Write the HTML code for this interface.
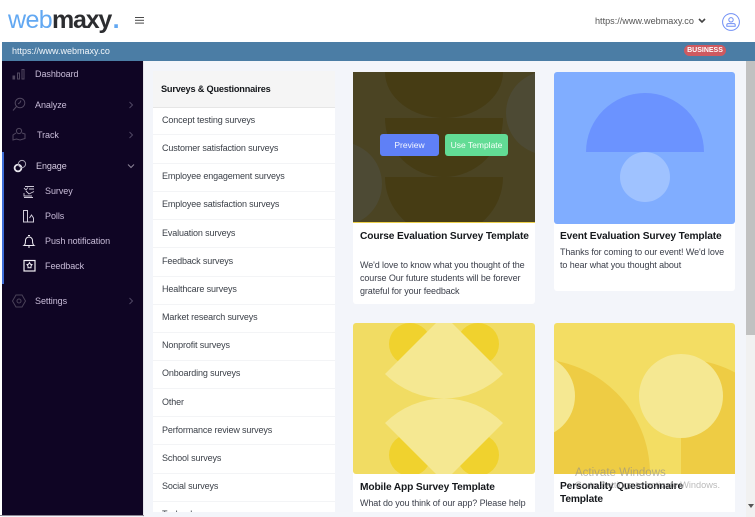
<!DOCTYPE html>
<html><head><meta charset="utf-8">
<style>
html,body{margin:0;padding:0;width:755px;height:517px;overflow:hidden;background:#f3f5fa}
body{font-family:"Liberation Sans",sans-serif;position:relative}
div,span,svg{position:absolute;white-space:nowrap}
.nav{color:#c8bcd8;font-size:9px;line-height:12px;letter-spacing:-.06px}
.row{left:162px;font-size:9px;line-height:12px;color:#3a3f47;letter-spacing:-.13px}
.sep{left:153px;width:182px;height:1px;background:#f3f4f6}
.ttl{font-size:10.2px;font-weight:bold;line-height:13px;color:#15181c;letter-spacing:-.13px}
.txt{font-size:9px;line-height:13.4px;color:#3b3f4a;letter-spacing:-.1px}
.chev{left:128px}
</style></head><body>
<!-- header -->
<div style="left:0;top:0;width:755px;height:42px;background:#fff"></div>
<div style="left:0;top:42px;width:2px;height:475px;background:#fff"></div>
<div style="left:8px;top:4px;font-size:25px;line-height:32px;color:#62a8f2;letter-spacing:-.6px">web</div>
<div style="left:52px;top:4px;font-size:25px;line-height:32px;font-weight:bold;color:#2c2d30;letter-spacing:-1.2px">maxy<span style="position:static;color:#62a8f2;letter-spacing:0;margin-left:1.500px">.</span></div>
<div style="left:135px;top:17px;width:9px;height:1.3px;background:#4a4a4a;box-shadow:0 2.800px 0 #4a4a4a,0 5.600px 0 #4a4a4a"></div>
<div style="left:595px;top:15px;font-size:9.100px;line-height:12px;color:#555">https://www.webmaxy.co</div>
<svg style="left:698px;top:18px" width="8" height="6" viewBox="0 0 8 6"><path d="M1 1l3 3 3-3" fill="none" stroke="#444" stroke-width="1.600"/></svg>
<svg style="left:722px;top:13px" width="18" height="18" viewBox="0 0 18 18" fill="none" stroke="#6f8ef5"><circle cx="9" cy="9" r="8.400"/><circle cx="9" cy="6.800" r="2.200"/><path d="M4.800 13.200v-1.200q0-1.400 1.400-1.400h5.600q1.400 0 1.400 1.400v1.200z"/></svg>
<!-- blue bar -->
<div style="left:2px;top:42px;width:753px;height:19px;background:#4b7da5"></div>
<div style="left:12px;top:45px;font-size:9px;line-height:12px;color:#f2f6fa">https://www.webmaxy.co</div>
<div style="left:684px;top:45px;width:42px;height:11px;border-radius:6px;background:#cf5a60;color:#fff;font-size:7px;font-weight:bold;line-height:11px;text-align:center">BUSINESS</div>
<!-- sidebar -->
<div style="left:2px;top:61px;width:141px;height:454px;background:#0f0524"></div>
<div style="left:2px;top:152px;width:2px;height:132px;background:#3f6fd8"></div>
<div style="left:143px;top:61px;width:1px;height:456px;background:#e4e5ea"></div>
<div style="left:0;top:515px;width:144px;height:1px;background:#8d8894"></div>
<svg style="left:12px;top:67px" width="14" height="14" viewBox="0 0 14 14" fill="none" stroke="#50475f"><rect x="1" y="9" width="1.600" height="3" fill="#50475f"/><rect x="5.500" y="6" width="2" height="6"/><rect x="10" y="2.500" width="2" height="9.500"/></svg>
<div class="nav" style="left:35px;top:68px">Dashboard</div>
<svg style="left:12px;top:97px" width="14" height="15" viewBox="0 0 14 15" fill="none" stroke="#50475f"><circle cx="8" cy="6" r="4.800"/><path d="M4.500 9.500L1 13.500M6 7l2-1.500 1-2"/></svg>
<div class="nav" style="left:35px;top:99px">Analyze</div>
<svg class="chev" style="top:101px" width="6" height="8" viewBox="0 0 6 8"><path d="M1.500 1l3 3-3 3" fill="none" stroke="#4f4763"/></svg>
<svg style="left:12px;top:127px" width="14" height="15" viewBox="0 0 14 15" fill="none" stroke="#50475f"><circle cx="7" cy="4" r="2.600"/><path d="M4 6l-3 2v5l3.500-1 3.500 1 5-1.500V7l-3-1"/></svg>
<div class="nav" style="left:37px;top:129px">Track</div>
<svg class="chev" style="top:131px" width="6" height="8" viewBox="0 0 6 8"><path d="M1.500 1l3 3-3 3" fill="none" stroke="#4f4763"/></svg>
<svg style="left:13px;top:159px" width="14" height="14" viewBox="0 0 14 14" fill="none" stroke="#e8e6ee"><circle cx="5" cy="9" r="3.400" stroke-width="1.800"/><circle cx="9" cy="5" r="3.600" stroke="#aaa5b5"/></svg>
<div class="nav" style="left:36px;top:160px;color:#d6cce2">Engage</div>
<svg style="left:127px;top:163px" width="8" height="6" viewBox="0 0 8 6"><path d="M1 1.500l3 3 3-3" fill="none" stroke="#8d8599"/></svg>
<svg style="left:22px;top:185px" width="14" height="14" viewBox="0 0 14 14" fill="none" stroke="#cfcad8" stroke-width=".9"><path d="M3 1.500h9M7 4h5M2 3l2 2 2-2.500M4 6l3 3 5-2.500M2 8v3h8M2 12.500h9"/></svg>
<div class="nav" style="left:45px;top:185px">Survey</div>
<svg style="left:22px;top:209px" width="14" height="14" viewBox="0 0 14 14" fill="none" stroke="#cfcad8"><path d="M1.500 13V1.500h4V13zM5.500 13h6V9l-2-3-2 3"/></svg>
<div class="nav" style="left:45px;top:210px">Polls</div>
<svg style="left:22px;top:234px" width="14" height="14" viewBox="0 0 14 14" fill="none" stroke="#f0eef4"><path d="M2 11.500h10q-1.500-1-1.500-5a3.500 3.500 0 0 0-7 0q0 4-1.500 5zM6 1.500h2M6 13h2"/></svg>
<div class="nav" style="left:45px;top:235px">Push notification</div>
<svg style="left:23px;top:259px" width="13" height="13" viewBox="0 0 13 13" fill="none" stroke="#f0eef4"><rect x="1" y="1.500" width="11" height="10.500" stroke-width="1.200"/><path d="M6.500 3.500l1 1.800 1.500.3-1 1.400v1.800h-3V7l-1-1.400 1.500-.3z"/></svg>
<div class="nav" style="left:45px;top:260px">Feedback</div>
<svg style="left:12px;top:294px" width="14" height="14" viewBox="0 0 14 14" fill="none" stroke="#4a4258"><path d="M4 1h6l3.500 6-3.500 6H4L.500 7z"/><circle cx="7" cy="7" r="2"/></svg>
<div class="nav" style="left:35px;top:295px">Settings</div>
<svg class="chev" style="top:297px" width="6" height="8" viewBox="0 0 6 8"><path d="M1.500 1l3 3-3 3" fill="none" stroke="#4f4763"/></svg>
<!-- list panel -->
<div style="left:153px;top:71px;width:182px;height:441px;background:#fff"></div>
<div style="left:153px;top:71px;width:182px;height:36px;background:#f5f5f5;border-bottom:1px solid #e6e6e6;box-sizing:content-box"></div>
<div style="left:161px;top:83px;font-size:9.200px;font-weight:bold;line-height:12px;color:#15181c;letter-spacing:-.2px">Surveys &amp; Questionnaires</div>
<div class="row" style="top:114px">Concept testing surveys</div><div class="sep" style="top:134px"></div>
<div class="row" style="top:142px">Customer satisfaction surveys</div><div class="sep" style="top:163px"></div>
<div class="row" style="top:170px">Employee engagement surveys</div><div class="sep" style="top:191px"></div>
<div class="row" style="top:198px">Employee satisfaction surveys</div><div class="sep" style="top:219px"></div>
<div class="row" style="top:227px">Evaluation surveys</div><div class="sep" style="top:247px"></div>
<div class="row" style="top:255px">Feedback surveys</div><div class="sep" style="top:276px"></div>
<div class="row" style="top:283px">Healthcare surveys</div><div class="sep" style="top:304px"></div>
<div class="row" style="top:311px">Market research surveys</div><div class="sep" style="top:332px"></div>
<div class="row" style="top:339px">Nonprofit surveys</div><div class="sep" style="top:360px"></div>
<div class="row" style="top:367px">Onboarding surveys</div><div class="sep" style="top:388px"></div>
<div class="row" style="top:396px">Other</div><div class="sep" style="top:416px"></div>
<div class="row" style="top:424px">Performance review surveys</div><div class="sep" style="top:444px"></div>
<div class="row" style="top:452px">School surveys</div><div class="sep" style="top:473px"></div>
<div class="row" style="top:480px">Social surveys</div><div class="sep" style="top:501px"></div>
<svg style="left:153px;top:502px" width="182" height="10" viewBox="0 0 182 10"><text x="9" y="15" font-family="Liberation Sans, sans-serif" font-size="9" letter-spacing="-.13" fill="#3a3f47">Technology surveys</text></svg>
<!-- cards -->
<div style="left:353px;top:72px;width:182px;height:232px;background:#fff;border-radius:3px"></div>
<svg style="left:353px;top:72px" width="182" height="151" viewBox="353 72 182 151">
<rect x="353" y="72" width="182" height="151" fill="#4b4423"/>
<path d="M385 72h118a59 46 0 0 1-118 0z" fill="#463c14"/>
<path d="M385 118h118a59 59 0 0 1-118 0z" fill="#463c14"/>
<path d="M385 177h118a59 59 0 0 1-118 0z" fill="#463c14"/>
<circle cx="548" cy="113" r="42" fill="#4d4a34"/><circle cx="340" cy="184" r="42" fill="#4d4a34"/>
<rect x="353" y="222" width="182" height="1.500" fill="#ecd04a"/>
</svg>
<div style="left:380px;top:134px;width:59px;height:22px;background:#5f80f6;border-radius:3px;color:#f4f6ff;font-size:8.500px;line-height:22px;text-align:center">Preview</div>
<div style="left:445px;top:134px;width:63px;height:22px;background:#62dc95;border-radius:3px;color:#f4fff8;font-size:8.500px;line-height:22px;text-align:center">Use Template</div>
<div class="ttl" style="left:360px;top:230px">Course Evaluation Survey Template</div>
<div class="txt" style="left:360px;top:258.500px">We'd love to know what you thought of the<br>course Our future students will be forever<br>grateful for your feedback</div>

<div style="left:554px;top:72px;width:181px;height:219px;background:#fff;border-radius:3px"></div>
<svg style="left:554px;top:72px" width="181" height="152" viewBox="554 72 181 152">
<rect x="554" y="72" width="181" height="152" rx="3" fill="#80adff"/>
<path d="M586 152a59 59 0 0 1 118 0z" fill="#6b93ff"/>
<circle cx="645" cy="177" r="25" fill="#9fc2ff"/>
</svg>
<div class="ttl" style="left:560px;top:230px">Event Evaluation Survey Template</div>
<div class="txt" style="left:560px;top:245.500px">Thanks for coming to our event! We'd love<br>to hear what you thought about</div>

<div style="left:353px;top:323px;width:182px;height:189px;background:#fff;border-radius:3px 3px 0 0"></div>
<svg style="left:353px;top:323px" width="182" height="151" viewBox="353 323 182 151">
<rect x="353" y="323" width="182" height="151" rx="3" fill="#f1dc63"/>
<circle cx="410" cy="344" r="21" fill="#f0d22e"/><circle cx="478" cy="344" r="21" fill="#f0d22e"/>
<circle cx="410" cy="455" r="21" fill="#f0d22e"/><circle cx="478" cy="455" r="21" fill="#f0d22e"/>
<path d="M444 315L385 374A83.300 83.300 0 0 0 503 374z" fill="#f5e892"/>
<path d="M444 482L385 423A83.300 83.300 0 0 1 503 423z" fill="#f5e892"/>
</svg>
<div class="ttl" style="left:360px;top:481px">Mobile App Survey Template</div>
<div class="txt" style="left:360px;top:496.500px">What do you think of our app? Please help</div>

<div style="left:554px;top:323px;width:181px;height:189px;background:#fff;border-radius:3px 3px 0 0"></div>
<svg style="left:554px;top:323px" width="181" height="151" viewBox="554 323 181 151">
<rect x="554" y="323" width="181" height="151" rx="3" fill="#f3dd63"/>
<circle cx="535" cy="474" r="115" fill="#eecc44"/>
<path d="M681 359a115 115 0 0 1 115 115H681z" fill="#eecc44"/>
<circle cx="681" cy="396" r="42" fill="#f5e892"/>
<circle cx="533" cy="396" r="42" fill="#f5e892"/>
</svg>
<div class="ttl" style="left:560px;top:481px;line-height:12.600px">Personality Questionnaire<br>Template</div>
<!-- bottom clip -->
<div style="left:144px;top:512px;width:602px;height:5px;background:#f3f5fa"></div>
<!-- scrollbar -->
<div style="left:746px;top:61px;width:9px;height:456px;background:#f1f1f1"></div>
<div style="left:746px;top:61px;width:9px;height:274px;background:#c1c1c1"></div>
<svg style="left:748px;top:504px" width="6" height="4" viewBox="0 0 6 4"><path d="M0 0h6L3 4z" fill="#555"/></svg>
<!-- watermark -->
<div style="left:575px;top:466px;font-size:11.500px;line-height:14px;color:rgba(140,140,140,.6)">Activate Windows</div>
<div style="left:575px;top:480px;font-size:9.200px;line-height:11px;color:rgba(140,140,140,.6)">Go to Settings to activate Windows.</div>
</body></html>
